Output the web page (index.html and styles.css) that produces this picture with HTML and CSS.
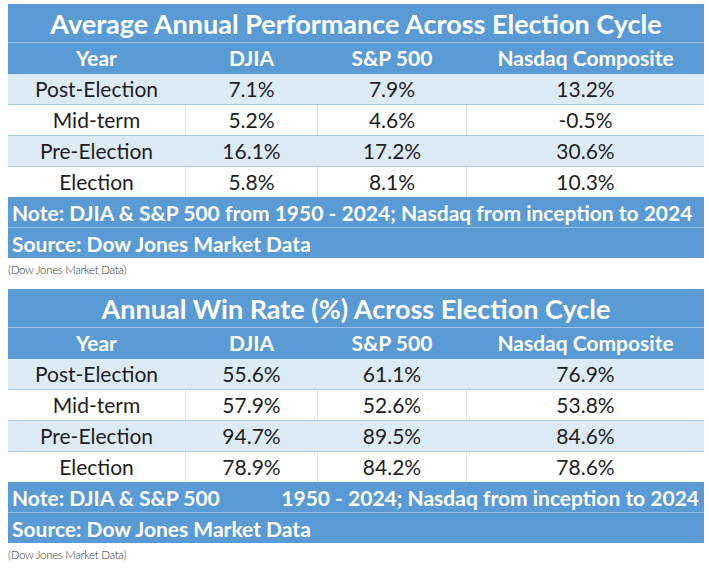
FILE: index.html
```html
<!DOCTYPE html>
<html>
<head>
<meta charset="utf-8">
<link rel="stylesheet" href="styles.css">
</head>
<body>
<div class="page">
  <section class="tbl">
    <div class="title">Average Annual Performance Across Election Cycle</div>
    <div class="row head"><span>Year</span><span>DJIA</span><span>S&amp;P 500</span><span>Nasdaq Composite</span></div>
    <div class="row alt"><span>Post-Election</span><span>7.1%</span><span>7.9%</span><span>13.2%</span></div>
    <div class="row"><span>Mid-term</span><span>5.2%</span><span>4.6%</span><span>-0.5%</span></div>
    <div class="row alt"><span>Pre-Election</span><span>16.1%</span><span>17.2%</span><span>30.6%</span></div>
    <div class="row last"><span>Election</span><span>5.8%</span><span>8.1%</span><span>10.3%</span></div>
    <div class="note"><span>Note: DJIA &amp; S&amp;P 500 from 1950 - 2024; Nasdaq from inception to 2024</span></div>
    <div class="source">Source: Dow Jones Market Data</div>
  </section>
  <p class="caption">(Dow Jones Market Data)</p>
  <section class="tbl">
    <div class="title">Annual Win Rate (%) Across Election Cycle</div>
    <div class="row head"><span>Year</span><span>DJIA</span><span>S&amp;P 500</span><span>Nasdaq Composite</span></div>
    <div class="row alt"><span>Post-Election</span><span>55.6%</span><span>61.1%</span><span>76.9%</span></div>
    <div class="row"><span>Mid-term</span><span>57.9%</span><span>52.6%</span><span>53.8%</span></div>
    <div class="row alt"><span>Pre-Election</span><span>94.7%</span><span>89.5%</span><span>84.6%</span></div>
    <div class="row last"><span>Election</span><span>78.9%</span><span>84.2%</span><span>78.6%</span></div>
    <div class="note split"><span>Note: DJIA &amp; S&amp;P 500</span><span>1950 - 2024; Nasdaq from inception to 2024</span></div>
    <div class="source">Source: Dow Jones Market Data</div>
  </section>
  <p class="caption">(Dow Jones Market Data)</p>
</div>
</body>
</html>
```

FILE: styles.css
```css
* { box-sizing: border-box; }
html, body { margin: 0; padding: 0; background: #ffffff; }
body { font-family: Lato, "Liberation Sans", sans-serif; color: #1e1e1e; }
.page { padding: 4px 5px 0 8px; width: 709px; }
.tbl { width: 696px; display: flex; flex-direction: column; }
.title {
  height: 39px;
  background: #5b9bd5;
  color: #ffffff;
  font-size: 27px;
  font-weight: 700;
  text-align: center;
  line-height: 39px;
  border-bottom: 1px solid #9cc3e7;
}
.row {
  display: grid;
  grid-template-columns: 177px 132px 149px 1fr;
  height: 31px;
  font-size: 21px;
  line-height: 30px;
  text-align: center;
  border-bottom: 1px solid #a9c9e8;
  background: #ffffff;
}
.row span { border-left: 1px solid #e2e2e2; }
.row span:first-child { border-left: none; }
.row.alt { background: #ddebf7; }
.row.alt span { border-left-color: transparent; }
.row.head {
  background: #5b9bd5;
  color: #ffffff;
  font-weight: 700;
  border-bottom: none;
}
.row.head span { border-left-color: transparent; }
.row.last { height: 30px; border-bottom: none; }
.note, .source {
  background: #5b9bd5;
  color: #ffffff;
  font-weight: 700;
  font-size: 21px;
  padding: 0 5px 0 4px;
  display: flex;
  align-items: center;
  white-space: nowrap;
}
.note { height: 31px; border-bottom: 1px solid #8fbbe3; }
.note.split { justify-content: space-between; }
.source { height: 30px; }
.caption {
  margin: 0;
  height: 31px;
  font-size: 11.5px;
  font-weight: 300;
  line-height: 24px;
  color: #333333;
  letter-spacing: -0.3px;
}
```
